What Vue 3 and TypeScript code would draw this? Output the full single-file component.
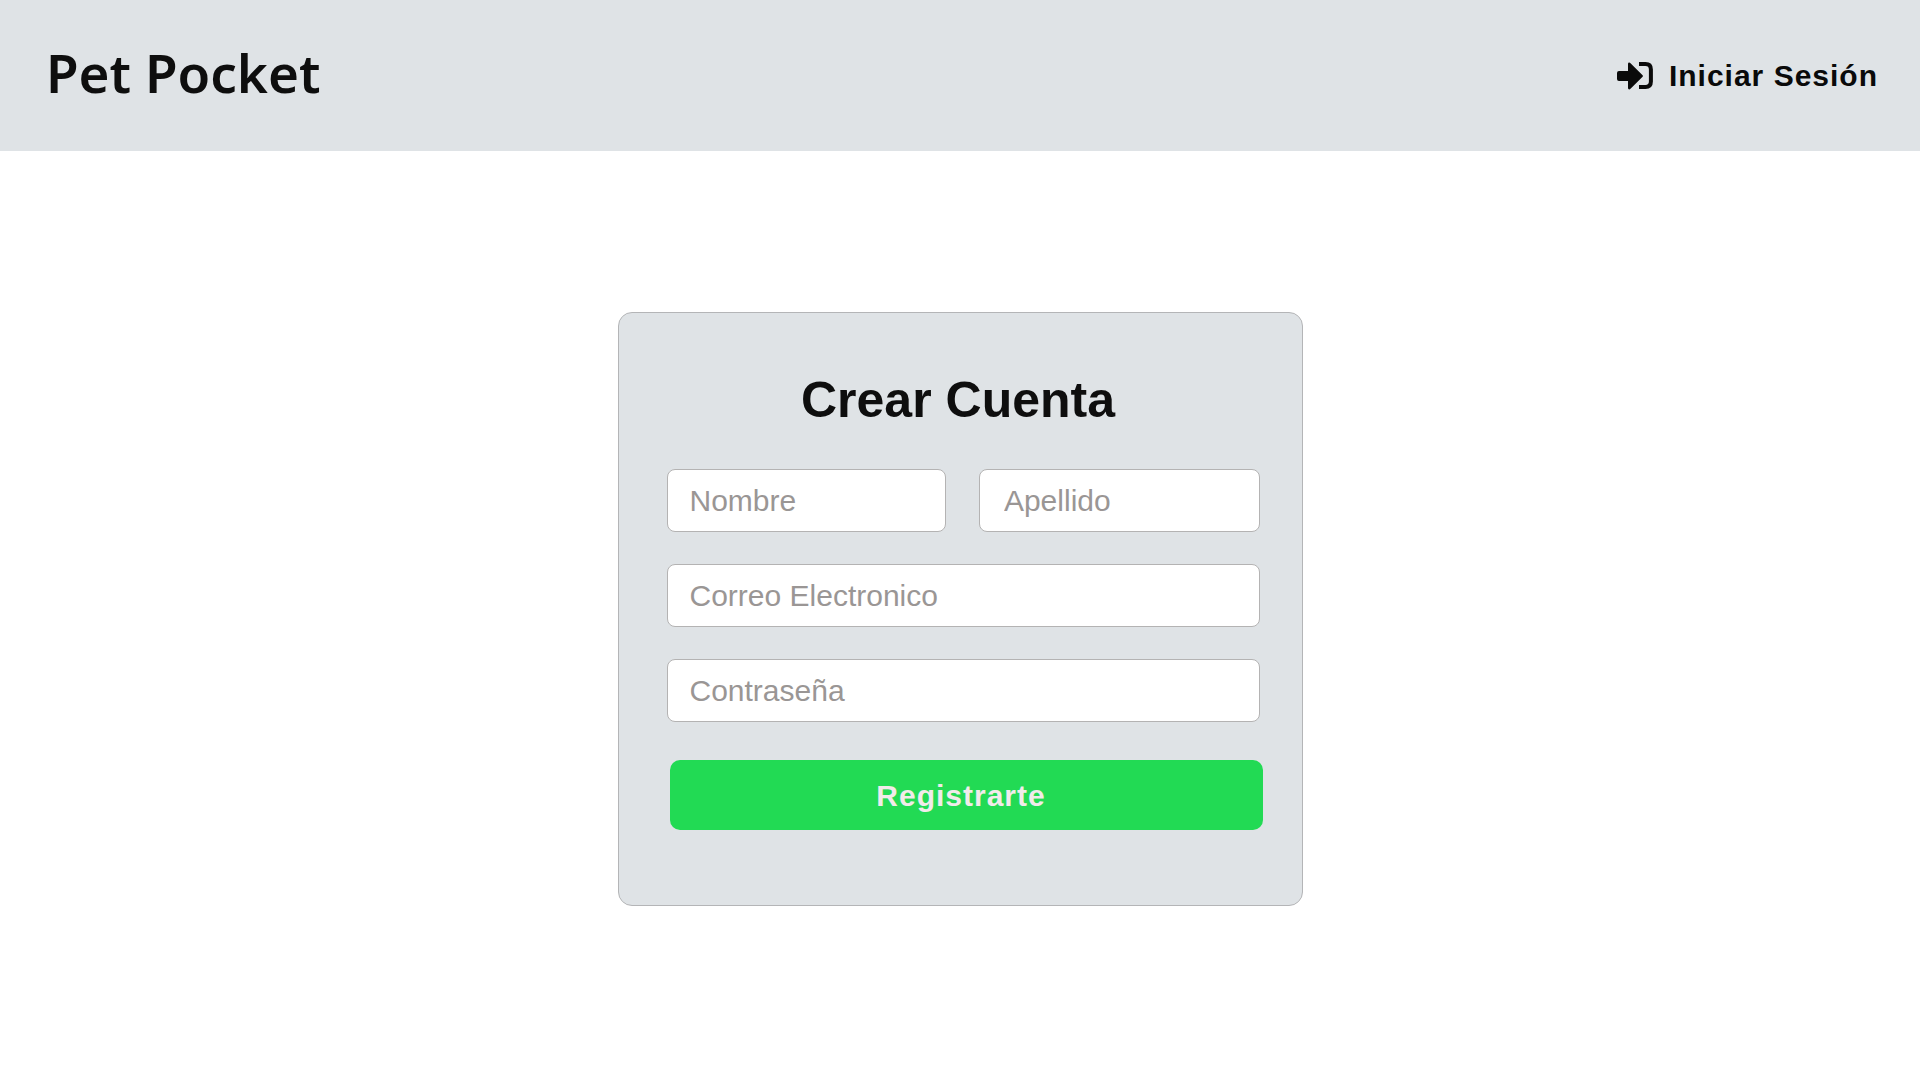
<script setup lang="ts">
import { reactive } from 'vue'

interface Account {
  nombre: string
  apellido: string
  correo: string
  contrasena: string
}

const account = reactive<Account>({
  nombre: '',
  apellido: '',
  correo: '',
  contrasena: '',
})
</script>

<template>
  <div class="page">
    <header class="topbar">
      <a class="brand" href="#">Pet Pocket</a>
      <a class="login" href="#login">
        <svg class="login-icon" viewBox="0 0 36 28" aria-hidden="true">
          <path
            d="M2 9H11V2Q11 .6 12.2 .6Q12.9 .6 13.5 1.2L25.6 13.2Q26.4 14 25.6 14.8L13.5 26.8Q12.9 27.4 12.2 27.4Q11 27.4 11 26V19H2Q0 19 0 17V11Q0 9 2 9Z"
            fill="currentColor"
          />
          <path
            d="M22 2.1H28.5Q33.9 2.1 33.9 7.5V19.5Q33.9 24.9 28.5 24.9H22"
            fill="none"
            stroke="currentColor"
            stroke-width="4"
          />
        </svg>
        <span>Iniciar Sesión</span>
      </a>
    </header>

    <main class="content">
      <form class="card" @submit.prevent>
        <h1 class="title">Crear Cuenta</h1>
        <div class="fields">
          <div class="names">
            <input v-model="account.nombre" class="field" type="text" placeholder="Nombre" aria-label="Nombre" />
            <input v-model="account.apellido" class="field" type="text" placeholder="Apellido" aria-label="Apellido" />
          </div>
          <input
            v-model="account.correo"
            class="field"
            type="email"
            placeholder="Correo Electronico"
            aria-label="Correo Electronico"
          />
          <input
            v-model="account.contrasena"
            class="field"
            type="password"
            placeholder="Contraseña"
            aria-label="Contraseña"
          />
        </div>
        <button class="submit" type="submit">Registrarte</button>
      </form>
    </main>
  </div>
</template>

<style>
body {
  margin: 0;
  background: #fff;
}
</style>

<style scoped>
.page,
.page * {
  box-sizing: border-box;
}

.page {
  font-family: 'Liberation Sans', Arial, sans-serif;
  font-size: 30px;
  color: #0e0e0e;
}

.topbar {
  display: flex;
  align-items: center;
  justify-content: space-between;
  min-height: 151px;
  padding: 0 42px 0 46px;
  background: #dfe3e6;
}

.brand {
  padding-bottom: 6px;
  color: #0e0e0e;
  font-family: 'Noto Sans', sans-serif;
  font-size: 53px;
  font-weight: 600;
  line-height: 60px;
  text-decoration: none;
}

.login {
  display: flex;
  align-items: center;
  gap: 16px;
  color: #0a0a0a;
  font-weight: 700;
  letter-spacing: 1px;
  text-decoration: none;
}

.login-icon {
  width: 36px;
  height: 28px;
}

.content {
  display: flex;
  justify-content: center;
  padding: 161px 16px 32px;
}

.card {
  display: flex;
  flex-direction: column;
  width: 100%;
  max-width: 685px;
  padding: 57px 42px 75px 48px;
  border: 1px solid #b4b5b7;
  border-radius: 14px;
  background: #dfe3e6;
}

.title {
  margin: 0 0 39px;
  padding-right: 10px;
  font-size: 50px;
  font-weight: 700;
  line-height: 60px;
  text-align: center;
}

.fields {
  display: flex;
  flex-direction: column;
  gap: 32px;
}

.names {
  display: flex;
  gap: 33px;
}

.field {
  display: block;
  width: 100%;
  min-width: 0;
  height: 63px;
  padding: 0 22px;
  border: 1px solid #b4b3b3;
  border-radius: 8px;
  background: #fff;
  color: inherit;
  font: inherit;
}

.names .field + .field {
  padding-left: 24px;
}

.field::placeholder {
  color: #9a9695;
  opacity: 1;
}

.submit {
  height: 70px;
  margin: 38px -3px 0 3px;
  padding: 2px 10px 0 0;
  border: 0;
  border-radius: 10px;
  background: #22da54;
  color: #f1ebea;
  font: inherit;
  font-weight: 700;
  letter-spacing: 1px;
  cursor: pointer;
}
</style>
